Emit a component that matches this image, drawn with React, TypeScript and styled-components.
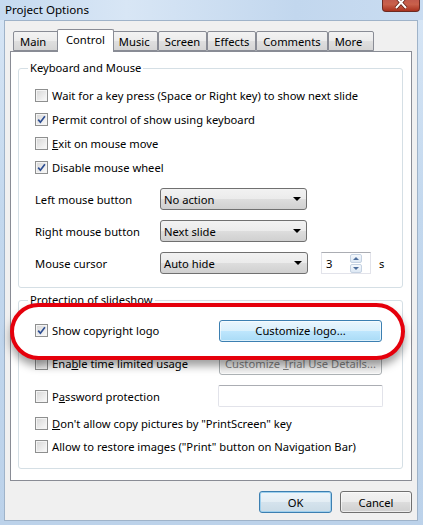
import styled, { createGlobalStyle } from "styled-components";

const GlobalStyle = createGlobalStyle`
  html, body {
    margin: 0;
    padding: 0;
    background: #fff;
  }
  body {
    font-family: "Noto Sans", "Open Sans", sans-serif;
    font-size: 11.2px;
    color: #000;
  }
`;

const Window = styled.div`
  position: relative;
  width: 423px;
  height: 525px;
  display: flex;
  flex-direction: column;
  overflow: hidden;
  background: linear-gradient(180deg, #c9dcf0 0%, #d6e5f5 3%, #c3d8ee 40%, #bcd2ea 100%);
`;

const TitleBar = styled.div`
  height: 20px;
  display: flex;
  justify-content: space-between;
  align-items: flex-start;
  background: linear-gradient(90deg, #c6daf0 0%, #d8e6f5 30%, #c2d7ee 70%, #c9dcf1 100%);
`;

const Title = styled.span`
  padding: 2px 0 0 5px;
  line-height: 15px;
  font-size: 11.6px;
  color: #000;
`;

const CloseButton = styled.div`
  width: 38px;
  height: 12px;
  margin-right: 3px;
  box-sizing: border-box;
  border: 1px solid #6d2a22;
  border-top: none;
  border-radius: 0 0 4px 4px;
  background: linear-gradient(180deg, #c25a4c 0%, #c9604b 40%, #a9321f 100%);
  display: flex;
  justify-content: center;
  overflow: hidden;
`;

const Client = styled.div`
  flex: 1;
  margin: 0 5px 4px 4px;
  border: 1px solid #9fb3c9;
  background: #f0f0f0;
  display: flex;
  flex-direction: column;
`;

const TabStrip = styled.div`
  display: flex;
  align-items: flex-end;
  height: 22px;
  padding: 8px 0 0 8px;
`;

const Tab = styled.div<{ $active?: boolean }>`
  position: relative;
  z-index: ${(p) => (p.$active ? 1 : 0)};
  box-sizing: border-box;
  height: ${(p) => (p.$active ? 23 : 20)}px;
  min-width: ${(p) => (p.$active ? 0 : 46)}px;
  margin: 0 ${(p) => (p.$active ? -2 : 0)}px ${(p) => (p.$active ? -1 : 0)}px;
  padding: 0 ${(p) => (p.$active ? 8 : 6)}px;
  border: 1px solid #898c95;
  border-bottom: ${(p) => (p.$active ? "none" : "1px solid #898c95")};
  border-radius: 2px 2px 0 0;
  background: ${(p) =>
    p.$active ? "#fff" : "linear-gradient(180deg, #f3f3f3 0%, #ebebeb 50%, #dfdfdf 51%, #d5d5d5 100%)"};
  display: flex;
  align-items: center;
  padding-bottom: ${(p) => (p.$active ? 3 : 0)}px;
  white-space: nowrap;
`;

const Panel = styled.div`
  margin: 0 5px;
  height: 430px;
  box-sizing: border-box;
  padding: 8px 8px 0 7px;
  border: 1px solid #898c95;
  background: #fff;
  display: flex;
  flex-direction: column;
  gap: 4px;
`;

const Group = styled.fieldset<{ $pt: number; $pb: number }>`
  margin: 0;
  min-width: 0;
  padding: ${(p) => p.$pt}px 0 ${(p) => p.$pb}px 16px;
  border: 1px solid #d5dfe5;
  border-radius: 3px;
`;

const Legend = styled.legend`
  margin-left: -7px;
  padding: 0 2px;
  line-height: 16px;
  color: #000;
`;

const Row = styled.div<{ $h: number; $raised?: boolean }>`
  height: ${(p) => p.$h}px;
  display: flex;
  align-items: center;
  position: ${(p) => (p.$raised ? "relative" : "static")};
  z-index: ${(p) => (p.$raised ? 2 : "auto")};
`;

const CheckLabel = styled.label<{ $w?: number }>`
  display: flex;
  align-items: center;
  gap: 4px;
  width: ${(p) => (p.$w ? `${p.$w}px` : "auto")};
  flex-shrink: 0;
  white-space: nowrap;
`;

const Box = styled.span`
  box-sizing: border-box;
  width: 13px;
  height: 13px;
  border: 1px solid #8e8f8f;
  box-shadow: inset 0 0 0 1px #f4f4f4;
  background: linear-gradient(135deg, #d6d6d6 0%, #ececec 60%, #fbfbfb 100%);
  display: flex;
  align-items: center;
  justify-content: center;
`;

const FieldLabel = styled.span`
  width: 125px;
  flex-shrink: 0;
`;

const SelectBox = styled.div<{ $w: number }>`
  box-sizing: border-box;
  width: ${(p) => p.$w}px;
  height: 22px;
  padding: 0 5px 0 3px;
  border: 1px solid #707070;
  border-radius: 3px;
  background: linear-gradient(180deg, #f2f2f2 0%, #ebebeb 50%, #dddddd 51%, #d0d0d0 100%);
  display: flex;
  align-items: center;
  justify-content: space-between;
`;

const Arrow = styled.span`
  width: 0;
  height: 0;
  border-left: 4px solid transparent;
  border-right: 4px solid transparent;
  border-top: 4px solid #000;
`;

const SpinBox = styled.div`
  box-sizing: border-box;
  width: 50px;
  height: 22px;
  margin-left: 13px;
  padding: 0 1px 0 4px;
  border: 1px solid #e2e3ea;
  border-top-color: #abadb3;
  background: #fff;
  display: flex;
  align-items: center;
  justify-content: space-between;
`;

const SpinButtons = styled.div`
  display: flex;
  flex-direction: column;
  gap: 1px;
  margin-right: 7px;
`;

const SpinButton = styled.span<{ $down?: boolean }>`
  box-sizing: border-box;
  width: 12px;
  height: 9px;
  border: 1px solid #c5d2e2;
  border-radius: 2px;
  background: linear-gradient(180deg, #f4f8fc 0%, #dde8f4 100%);
  display: flex;
  align-items: center;
  justify-content: center;
  &::after {
    content: "";
    border-left: 3px solid transparent;
    border-right: 3px solid transparent;
    ${(p) => (p.$down ? "border-top" : "border-bottom")}: 3px solid #4e6e9c;
  }
`;

const Unit = styled.span`
  margin-left: 8px;
`;

const PushButton = styled.div<{ $w: number; $tone: "hot" | "normal" | "disabled" | "default" }>`
  box-sizing: border-box;
  width: ${(p) => p.$w}px;
  height: 22px;
  border-radius: 3px;
  display: flex;
  align-items: center;
  justify-content: center;
  white-space: nowrap;
  border: 1px solid
    ${(p) =>
      p.$tone === "hot" || p.$tone === "default" ? "#3c7fb1" : p.$tone === "disabled" ? "#adb2b5" : "#707070"};
  color: ${(p) => (p.$tone === "disabled" ? "#838383" : "#000")};
  background: ${(p) =>
    p.$tone === "hot"
      ? "linear-gradient(180deg, #eaf6fd 0%, #d9f0fc 50%, #bee6fd 51%, #a9dbf6 100%)"
      : p.$tone === "disabled"
      ? "#f4f4f4"
      : p.$tone === "default"
      ? "linear-gradient(180deg, #eef5fa 0%, #e3edf4 50%, #d5e3ed 51%, #cadbe6 100%)"
      : "linear-gradient(180deg, #f2f2f2 0%, #ebebeb 50%, #dddddd 51%, #cfcfcf 100%)"};
  box-shadow: ${(p) => (p.$tone === "default" ? "inset 0 0 0 1px #9fd0ee" : "inset 0 0 0 1px rgba(255,255,255,0.6)")};
`;

const TextInput = styled.div`
  box-sizing: border-box;
  width: 165px;
  height: 22px;
  margin-left: -1px;
  border: 1px solid #e2e3ea;
  border-top-color: #abadb3;
  border-radius: 2px;
  background: #fff;
`;

const Footer = styled.div`
  display: flex;
  justify-content: flex-end;
  gap: 8px;
  padding: 10px 5px 0 0;
`;

const Highlight = styled.div`
  position: absolute;
  left: 10px;
  top: 303px;
  width: 395px;
  height: 57px;
  box-sizing: border-box;
  border: 4px solid #e5000c;
  border-radius: 29px;
  background: #fff;
  box-shadow: 0 6px 9px rgba(0, 0, 0, 0.38);
  z-index: 1;
`;

function Check({ checked }: { checked?: boolean }) {
  return (
    <Box>
      {checked && (
        <svg width="9" height="9" viewBox="0 0 9 9">
          <path d="M1.2 4.6 L3.4 7.2 L7.9 1.3" fill="none" stroke="#2c4d92" strokeWidth="1.7" />
        </svg>
      )}
    </Box>
  );
}

const tabs = ["Main", "Control", "Music", "Screen", "Effects", "Comments", "More"];

export default function App() {
  return (
    <>
      <GlobalStyle />
      <Window>
        <TitleBar>
          <Title>Project Options</Title>
          <CloseButton>
            <svg width="14" height="11" viewBox="0 0 14 11">
              <path d="M2 -3 L12 8 M12 -3 L2 8" stroke="#5a1a12" strokeWidth="3.4" />
              <path d="M2 -3 L12 8 M12 -3 L2 8" stroke="#fff" strokeWidth="2" />
            </svg>
          </CloseButton>
        </TitleBar>
        <Client>
          <TabStrip>
            {tabs.map((t) => (
              <Tab key={t} $active={t === "Control"}>
                {t}
              </Tab>
            ))}
          </TabStrip>
          <Panel>
            <Group $pt={7} $pb={8}>
              <Legend>Keyboard and Mouse</Legend>
              <Row $h={24}>
                <CheckLabel>
                  <Check />
                  Wait for a key press (Space or Right key) to show next slide
                </CheckLabel>
              </Row>
              <Row $h={24}>
                <CheckLabel>
                  <Check checked />
                  Permit control of show using keyboard
                </CheckLabel>
              </Row>
              <Row $h={24}>
                <CheckLabel>
                  <Check />
                  <span>
                    <u>E</u>xit on mouse move
                  </span>
                </CheckLabel>
              </Row>
              <Row $h={24}>
                <CheckLabel>
                  <Check checked />
                  Disable mouse wheel
                </CheckLabel>
              </Row>
              <div style={{ height: 4 }} />
              <Row $h={32}>
                <FieldLabel>Left mouse button</FieldLabel>
                <SelectBox $w={147}>
                  No action
                  <Arrow />
                </SelectBox>
              </Row>
              <Row $h={32}>
                <FieldLabel>Right mouse button</FieldLabel>
                <SelectBox $w={147}>
                  Next slide
                  <Arrow />
                </SelectBox>
              </Row>
              <Row $h={32}>
                <FieldLabel>Mouse cursor</FieldLabel>
                <SelectBox $w={148}>
                  Auto hide
                  <Arrow />
                </SelectBox>
                <SpinBox>
                  3
                  <SpinButtons>
                    <SpinButton />
                    <SpinButton $down />
                  </SpinButtons>
                </SpinBox>
                <Unit>s</Unit>
              </Row>
            </Group>
            <Group $pt={6} $pb={9}>
              <Legend>Protection of slideshow</Legend>
              <Row $h={33} $raised>
                <CheckLabel $w={184}>
                  <Check checked />
                  Show copyright logo
                </CheckLabel>
                <PushButton $w={163} $tone="hot">
                  Customize logo...
                </PushButton>
              </Row>
              <Row $h={33}>
                <CheckLabel $w={184}>
                  <Check />
                  <span>
                    Ena<u>b</u>le time limited usage
                  </span>
                </CheckLabel>
                <PushButton $w={163} $tone="disabled">
                  <span>
                    Customize <u>T</u>rial Use Details...
                  </span>
                </PushButton>
              </Row>
              <Row $h={32}>
                <CheckLabel $w={184}>
                  <Check />
                  <span>
                    P<u>a</u>ssword protection
                  </span>
                </CheckLabel>
                <TextInput />
              </Row>
              <Row $h={22}>
                <CheckLabel>
                  <Check />
                  <span>
                    <u>D</u>on't allow copy pictures by "PrintScreen" key
                  </span>
                </CheckLabel>
              </Row>
              <Row $h={25}>
                <CheckLabel>
                  <Check />
                  Allow to restore images ("Print" button on Navigation Bar)
                </CheckLabel>
              </Row>
            </Group>
          </Panel>
          <Footer>
            <PushButton $w={73} $tone="default">
              OK
            </PushButton>
            <PushButton $w={72} $tone="normal">
              Cancel
            </PushButton>
          </Footer>
        </Client>
        <Highlight />
      </Window>
    </>
  );
}
